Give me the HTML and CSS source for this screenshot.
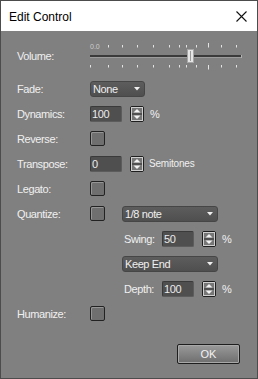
FILE: index.html
```html
<!DOCTYPE html>
<html lang="en">
<head>
  <meta charset="UTF-8" />
  <title>Edit Control</title>
  <link rel="stylesheet" href="styles.css">
</head>
<body>

  <svg width="0" height="0" class="defs">
    <symbol id="spin" viewBox="0 0 14 16">
      <rect x="0.5" y="0.5" width="13" height="15" rx="1.5" fill="#767676" stroke="#1e1e1e"/>
      <rect x="1.5" y="1.5" width="11" height="13" fill="none" stroke="#cfcfcf"/>
      <line x1="2" y1="8" x2="12" y2="8" stroke="#2a2a2a"/>
      <path d="M7 3 L10.5 6.5 H3.5 Z" fill="#f2f2f2"/>
      <path d="M7 13 L10.5 9.5 H3.5 Z" fill="#f2f2f2"/>
    </symbol>
    <symbol id="arrow" viewBox="0 0 6 4">
      <path d="M0 0 H6 L3 3.5 Z" fill="#f0f0f0"/>
    </symbol>
  </svg>

  <div class="window">
    <div class="titlebar">
      <span class="title">Edit Control</span>
      <svg class="close" width="11" height="11" viewBox="0 0 11 11">
        <path d="M0.5 0.5 L10.5 10.5 M10.5 0.5 L0.5 10.5" stroke="#111" stroke-width="1.1"/>
      </svg>
    </div>

    <div class="content">
      <div class="row volume">
        <span class="label">Volume:</span>
        <svg class="slider" width="156" height="28" viewBox="88 42 156 28">
          <text x="89" y="49" class="scale">0.0</text>
          <g stroke="#e4e4e4">
            <path d="M107.5 45 V47.5 M121.5 45 V47.5 M136.5 45 V47.5 M152.5 45 V47.5 M168.5 45 V47.5 M178.5 45 V47.5 M185.5 45 V47.5 M195.5 45 V47.5 M207.5 43 V47.5 M220.5 45 V47.5 M235.5 45 V47.5"/>
            <path d="M89.5 65 V67.5 M107.5 65 V67.5 M121.5 65 V67.5 M136.5 65 V67.5 M152.5 65 V67.5 M168.5 65 V67.5 M178.5 65 V67.5 M185.5 65 V67.5 M195.5 65 V67.5 M207.5 65 V69.5 M220.5 65 V67.5 M235.5 65 V67.5"/>
          </g>
          <rect x="89" y="55" width="152" height="3" fill="#3a3a3a"/>
          <rect x="89" y="57" width="152" height="1" fill="#9c9c9c"/>
          <rect x="240" y="55" width="1" height="3" fill="#b0b0b0"/>
          <rect x="186.5" y="49.5" width="6" height="13" fill="#e6e6e6" stroke="#a6a6a6"/>
          <line x1="189.5" y1="51" x2="189.5" y2="61" stroke="#9a9a9a"/>
        </svg>
      </div>

      <div class="row">
        <span class="label">Fade:</span>
        <div class="select fade">None<svg class="caret"><use href="#arrow"/></svg></div>
      </div>

      <div class="row">
        <span class="label">Dynamics:</span>
        <div class="field">100</div>
        <svg class="spin"><use href="#spin"/></svg>
        <span class="unit">%</span>
      </div>

      <div class="row">
        <span class="label">Reverse:</span>
        <div class="check"></div>
      </div>

      <div class="row">
        <span class="label">Transpose:</span>
        <div class="field">0</div>
        <svg class="spin"><use href="#spin"/></svg>
        <span class="unit small">Semitones</span>
      </div>

      <div class="row">
        <span class="label">Legato:</span>
        <div class="check"></div>
      </div>

      <div class="row">
        <span class="label">Quantize:</span>
        <div class="check"></div>
        <div class="select wide">1/8 note<svg class="caret"><use href="#arrow"/></svg></div>
      </div>

      <div class="row sub">
        <span class="sublabel">Swing:</span>
        <div class="field">50</div>
        <svg class="spin"><use href="#spin"/></svg>
        <span class="unit">%</span>
      </div>

      <div class="row sub">
        <div class="select wide">Keep End<svg class="caret"><use href="#arrow"/></svg></div>
      </div>

      <div class="row sub">
        <span class="sublabel">Depth:</span>
        <div class="field">100</div>
        <svg class="spin"><use href="#spin"/></svg>
        <span class="unit">%</span>
      </div>

      <div class="row">
        <span class="label">Humanize:</span>
        <div class="check"></div>
      </div>

      <div class="buttons">
        <button class="ok">OK</button>
      </div>
    </div>
  </div>

</body>
</html>
```

FILE: styles.css
```css
body {
  margin: 0;
  font-family: "Liberation Sans", Arial, sans-serif;
  background: #808080;
}
.defs {
  position: absolute;
}
.window {
  width: 258px;
  height: 379px;
  box-sizing: border-box;
  border: 1px solid #4c4c4c;
  background: #808080;
  display: flex;
  flex-direction: column;
}
.titlebar {
  height: 30px;
  background: #fff;
  display: flex;
  align-items: center;
  justify-content: space-between;
  padding: 0 10px 0 8px;
}
.title {
  font-size: 12px;
  color: #000;
  margin-top: 1px;
}
.close {
  display: block;
  margin-top: 1px;
}
.content {
  padding: 11px 0 0 16px;
  color: #f0f0f0;
  font-size: 11px;
  letter-spacing: -0.4px;
}
.row {
  height: 25px;
  display: flex;
  align-items: center;
}
.row.volume {
  height: 28px;
  margin-bottom: 6px;
}
.slider {
  display: block;
  margin-left: -1px;
}
.scale {
  font-family: "Liberation Sans", Arial, sans-serif;
  font-size: 7px;
  fill: #cdcdcd;
  letter-spacing: 0;
}
.label {
  width: 73px;
  flex: none;
}
.row.sub {
  padding-left: 105px;
}
.sublabel {
  width: 38px;
  padding-left: 2px;
  flex: none;
}
.field {
  width: 32px;
  height: 16px;
  box-sizing: border-box;
  background: #4f4f4f;
  border: 1px solid #5c5c5c;
  border-top-color: #3a3a3a;
  border-left-color: #3a3a3a;
  border-radius: 2px;
  padding-left: 1px;
  line-height: 14px;
  color: #ececec;
}
.spin {
  width: 14px;
  height: 16px;
  margin-left: 8px;
  display: block;
}
.unit {
  margin-left: 6px;
}
.unit.small {
  font-size: 10px;
  letter-spacing: -0.2px;
  margin-left: 5px;
}
.check {
  width: 15px;
  height: 15px;
  box-sizing: border-box;
  border: 1px solid #222;
  border-radius: 2px;
  background: #6f6f6f;
  box-shadow: inset 1px 1px 0 #959595;
}
.select {
  height: 16px;
  box-sizing: border-box;
  border: 1px solid #464646;
  border-radius: 3px;
  background: linear-gradient(#5d5d5d, #4f4f4f);
  display: flex;
  align-items: center;
  justify-content: space-between;
  padding: 0 4px 0 2px;
  color: #f0f0f0;
}
.select.fade {
  width: 55px;
}
.select.wide {
  width: 96px;
}
.row .check + .select {
  margin-left: 17px;
}
.caret {
  width: 6px;
  height: 4px;
}
.buttons {
  display: flex;
  justify-content: flex-end;
  padding-right: 17px;
  margin-top: 18px;
}
.ok {
  width: 63px;
  height: 20px;
  border: 1px solid #1e1e1e;
  border-radius: 2px;
  background: linear-gradient(#9a9a9a, #6e6e6e);
  box-shadow: inset 0 0 0 1px #a8a8a8;
  color: #f2f2f2;
  font-family: "Liberation Sans", Arial, sans-serif;
  font-size: 11px;
  padding: 0;
}
```
